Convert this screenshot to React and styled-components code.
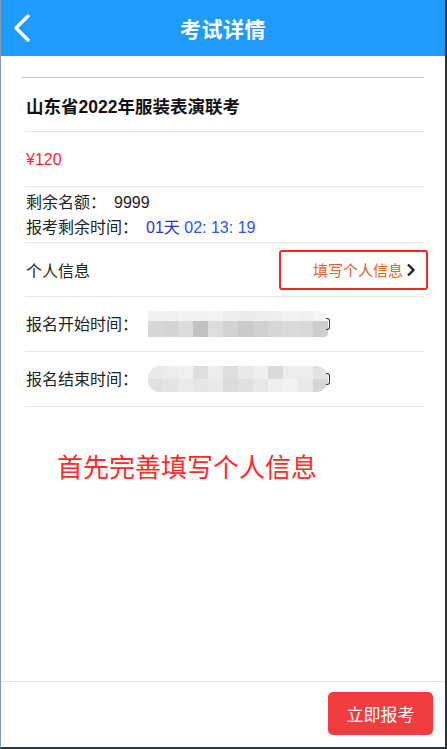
import styled, { createGlobalStyle } from "styled-components";

const GlobalStyle = createGlobalStyle`
  html, body {
    margin: 0;
    padding: 0;
    background: #ffffff;
  }
  body {
    font-family: "Liberation Sans", "Noto Sans CJK SC", sans-serif;
    color: #222;
  }
`;

const Page = styled.div`
  width: 447px;
  height: 749px;
  box-sizing: border-box;
  border-left: 1px solid #7d9cbd;
  border-right: 2px solid #2c323b;
  border-bottom: 2px solid #2c3440;
  display: flex;
  flex-direction: column;
  background: #fff;
  overflow: hidden;
`;

const Header = styled.header`
  height: 56px;
  flex-shrink: 0;
  background: #1e9bfd;
  display: flex;
  align-items: center;
  justify-content: center;
  position: relative;
`;

const BackButton = styled.div`
  position: absolute;
  left: 11px;
  top: 14px;
  width: 20px;
  height: 28px;
  display: flex;
  align-items: center;
`;

const Title = styled.h1`
  margin: 0;
  color: #fff;
  font-size: 21px;
  font-weight: bold;
  letter-spacing: 0.5px;
`;

const Body = styled.main`
  flex: 1;
  padding: 21px 21px 0 21px;
`;

const TopRule = styled.div`
  height: 1px;
  background: #c6c6c6;
`;

const Row = styled.div`
  height: ${(p) => p.$h || 54}px;
  box-sizing: border-box;
  margin-left: 3px;
  border-bottom: 1px solid #e6e6e6;
  display: flex;
  flex-direction: ${(p) => (p.$column ? "column" : "row")};
  justify-content: ${(p) => (p.$column ? "center" : "flex-start")};
  align-items: ${(p) => (p.$column ? "flex-start" : "center")};
  padding-left: 1px;
`;

const ExamName = styled.div`
  font-size: 17.5px;
  font-weight: bold;
  color: #111;
  margin-top: 2px;
`;

const Price = styled.div`
  font-size: 16px;
  color: #ee2b35;
  margin-top: 2px;
`;

const Line = styled.div`
  font-size: 16px;
  line-height: 25px;
  color: #222;
`;

const Value = styled.span`
  color: ${(p) => p.$color || "#222"};
  margin-left: ${(p) => p.$gap || 0}px;
`;

const Label = styled.span`
  font-size: 16px;
  color: #222;
  flex: 1;
`;

const FillBox = styled.div`
  width: 149px;
  height: 40px;
  box-sizing: border-box;
  border: 2px solid #ee2a2a;
  border-radius: 3px;
  margin-right: -4px;
  display: flex;
  align-items: center;
  justify-content: flex-end;
  padding-right: 10px;
  gap: 3px;
  color: #e5642c;
  font-size: 15px;
`;

const Mosaic = styled.div`
  display: grid;
  grid-template-columns: repeat(12, 15px);
  grid-template-rows: ${(p) => p.$rows};
  border-radius: ${(p) => p.$radius};
  overflow: hidden;
  margin-left: 10px;
`;

const Cell = styled.div`
  background: ${(p) => p.$shade};
`;

const Tail = styled.span`
  width: 3px;
  height: 10px;
  margin-left: -2px;
  border: 1.5px solid #333;
  border-left: none;
  border-radius: 0 3px 3px 0;
`;

const Note = styled.div`
  margin-top: 46px;
  padding-left: 35px;
  font-size: 26px;
  color: #ff2a2a;
  line-height: 30px;
`;

const Footer = styled.footer`
  height: 66px;
  box-sizing: border-box;
  flex-shrink: 0;
  border-top: 1px solid #dfe5ec;
  display: flex;
  align-items: center;
  justify-content: flex-end;
  padding: 0 12px 2px 0;
`;

const ApplyButton = styled.button`
  width: 105px;
  height: 43px;
  border: none;
  border-radius: 5px;
  background: #f13d3f;
  color: #fff;
  font-family: inherit;
  font-size: 17px;
  cursor: pointer;
`;

const startCells = [
  ["#f1f1f1", "#f0f0f0", "#f3f3f3", "#f2f2f2", "#f4f4f4", "#ededed", "#ebebeb", "#ececec", "#eeeeee", "#f2f2f2", "#f0f0f0", "#f5f5f5"],
  ["#d6d6d6", "#d4d4d4", "#dcdcdc", "#c2c2c2", "#dddddd", "#d3d3d3", "#cacaca", "#d0d0d0", "#d6d6d6", "#dadada", "#d8d8d8", "#cdcdcd"],
];

const endCells = [
  ["#e9e9e9", "#ececec", "#f0f0f0", "#dddddd", "#ededed", "#dedede", "#e9e9e9", "#efefef", "#dadada", "#ececec", "#ededed", "#e3e3e3"],
  ["#e0e0e0", "#e4e4e4", "#ebebeb", "#e6e6e6", "#e9e9e9", "#dcdcdc", "#e0e0e0", "#e8e8e8", "#eeeeee", "#f2f2f2", "#e9e9e9", "#d6d6d6"],
];

const Blurred = ({ cells, rows, radius }) => (
  <>
    <Mosaic $rows={rows} $radius={radius}>
      {cells.flat().map((c, i) => (
        <Cell key={i} $shade={c} />
      ))}
    </Mosaic>
    <Tail />
  </>
);

const Chevron = () => (
  <svg width="10" height="14" viewBox="0 0 10 14">
    <path d="M2 1.5 L7.5 7 L2 12.5" fill="none" stroke="#222" strokeWidth="2.4" />
  </svg>
);

export default function App() {
  return (
    <Page>
      <GlobalStyle />
      <Header>
        <BackButton>
          <svg width="20" height="28" viewBox="0 0 20 28">
            <path d="M16 2 L4 14 L16 26" fill="none" stroke="#fff" strokeWidth="3.4" strokeLinecap="round" strokeLinejoin="round" />
          </svg>
        </BackButton>
        <Title>考试详情</Title>
      </Header>

      <Body>
        <TopRule />
        <Row>
          <ExamName>山东省2022年服装表演联考</ExamName>
        </Row>
        <Row $h={55}>
          <Price>¥120</Price>
        </Row>
        <Row $h={56} $column>
          <Line>
            剩余名额：<Value $gap={8}>9999</Value>
          </Line>
          <Line>
            报考剩余时间：<Value $gap={8} $color="#2b2fd6">01天</Value>
            <Value $color="#2b55e0"> 02: 13: 19</Value>
          </Line>
        </Row>
        <Row>
          <Label>个人信息</Label>
          <FillBox>
            填写个人信息
            <Chevron />
          </FillBox>
        </Row>
        <Row $h={55}>
          <Line>报名开始时间：</Line>
          <Blurred cells={startCells} rows="10px 16px" radius="0 12px 4px 0" />
        </Row>
        <Row $h={55}>
          <Line>报名结束时间：</Line>
          <Blurred cells={endCells} rows="13px 13px" radius="12px" />
        </Row>
        <Note>首先完善填写个人信息</Note>
      </Body>

      <Footer>
        <ApplyButton>立即报考</ApplyButton>
      </Footer>
    </Page>
  );
}
